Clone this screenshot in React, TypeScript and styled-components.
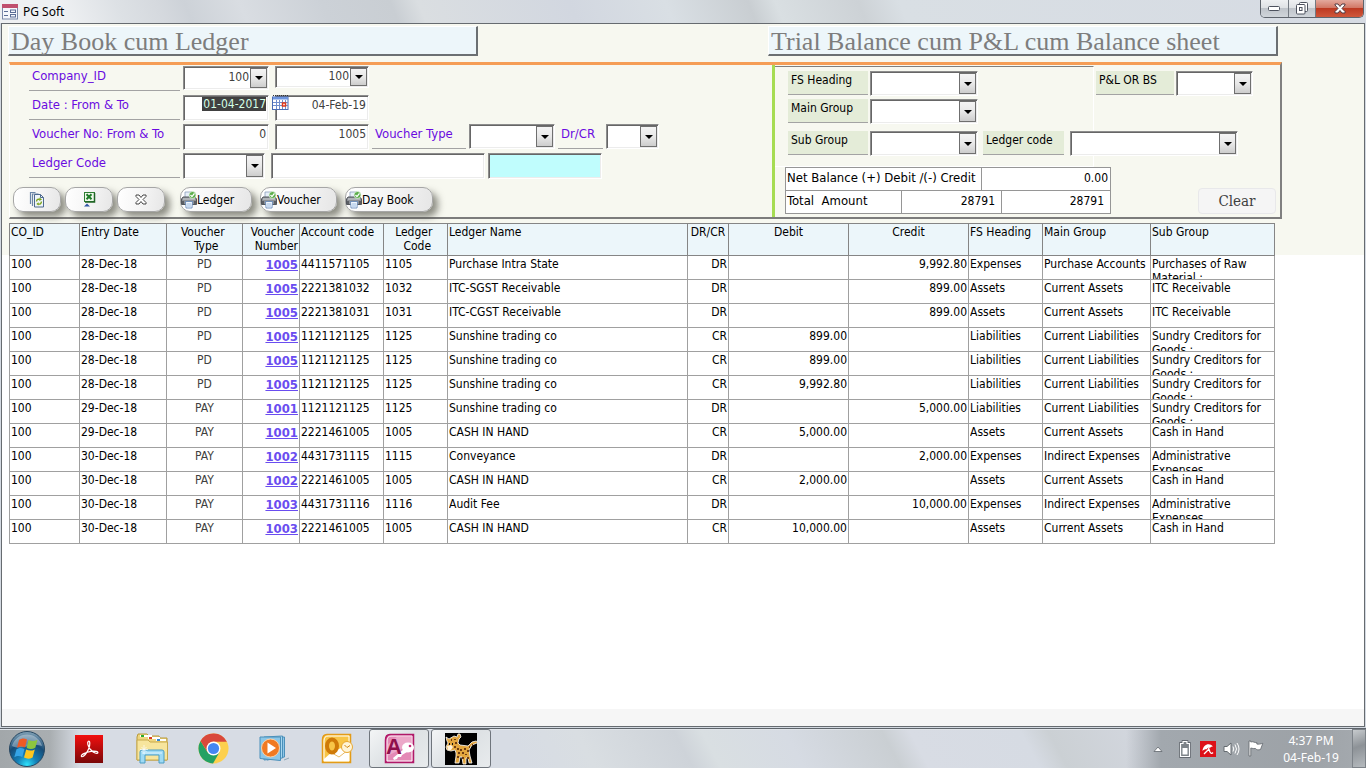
import React from "react";
import styled, { createGlobalStyle, css } from "styled-components";

const ui = `"DejaVu Sans Condensed", "DejaVu Sans", sans-serif`;
const book = `"Liberation Serif", serif`;
const cream = "#f7f8f0";

const Global = createGlobalStyle`
  * { box-sizing: border-box; }
  body { margin: 0; font: 12px/14px ${ui}; color: #000; background: #d3d9e1; }
  button, input, select { font: inherit; color: inherit; margin: 0; }
`;

const Screen = styled.div`
  display: flex;
  flex-direction: column;
  min-height: 100vh;
  overflow: hidden;
`;

/* ---------- window chrome ---------- */
const TitleBar = styled.header`
  display: flex;
  align-items: center;
  gap: 5px;
  height: 23px;
  padding: 0 2px;
  background: linear-gradient(68deg, #eef0f2 0 5%, #dde1e5 9%, #d5d9de 12%, #cdd2d8 14%, #d9dde2 18%, #ccd1d7 24%, #c9ced3 29%, #dadee1 31%, #d2d7e0 42%, #d9dfe4 49%, #c9ced2 55%, #d9dfe2 57%, #cdd2d6 63%, #d9dfe4 66%, #d6dbe3);
`;
const AppName = styled.span`
  flex: 1;
  font: 12px/16px "Noto Sans", sans-serif;
`;
const WindowButtons = styled.div`
  display: flex;
  align-self: flex-start;
  height: 18px;
  border: 1px solid #5f656d;
  border-top: 0;
  border-radius: 0 0 5px 5px;
  overflow: hidden;
`;
const WindowButton = styled.button<{ $w: number; $close?: boolean }>`
  display: grid;
  place-items: center;
  width: ${(p) => p.$w}px;
  padding: 0;
  border: 0;
  border-right: ${(p) => (p.$close ? 0 : 1)}px solid #747a82;
  background: ${(p) =>
    p.$close
      ? "linear-gradient(#e3a99d, #d27866 45%, #bd3a22 50%, #d0573a)"
      : "linear-gradient(#eef0f2, #dfe2e5 45%, #bfc4ca 50%, #d0d5da)"};
`;
const Frame = styled.main`
  display: flex;
  flex: 1;
  flex-direction: column;
  margin: 0 1px 1px;
  border: 1px solid #666b70;
  background: #fff;
`;
const FooterStrip = styled.div`
  height: 17px;
  margin-top: auto;
  background: #f6f6f6;
`;

/* ---------- form header ---------- */
const FormHeader = styled.section`
  padding: 2px 82px 4px 6px;
  background: ${cream};
`;
const Headings = styled.div`
  display: flex;
  justify-content: space-between;
  padding: 0 4px 0 0;
  margin-bottom: 6px;
`;
const Heading = styled.h1<{ $w: number }>`
  width: ${(p) => p.$w}px;
  height: 30px;
  margin: 0;
  padding: 0 2px;
  border: 1px solid #fff;
  border-right: 2px solid #6b6f72;
  border-bottom: 2px solid #6b6f72;
  background: #edf6fa;
  color: #7d7d7d;
  font: 26px/30px ${book};
  white-space: nowrap;
`;
const Panel = styled.div`
  display: flex;
  height: 157px;
  margin-left: 1px;
  border: solid;
  border-width: 3px 2px 2px 1px;
  border-color: #f59d56 #808080 #7c7c7c #fff;
`;
const Filters = styled.form`
  flex: 1;
  padding-top: 1px;
`;
const Row = styled.div<{ $h?: number }>`
  display: flex;
  gap: 3px;
  height: ${(p) => p.$h ?? 29}px;
  padding-left: 19px;
`;
const Label = styled.label<{ $w: number }>`
  flex: none;
  width: ${(p) => p.$w}px;
  height: 25px;
  padding: 2px 3px;
  border-bottom: 1px solid #a3a3a3;
  color: #6a0be0;
  font-size: 13px;
  line-height: 16px;
  white-space: nowrap;
`;
const Slot = styled.div<{ $w: number }>`
  position: relative;
  flex: none;
  width: ${(p) => p.$w}px;
`;
const sunken = css`
  border: 1px solid;
  border-color: #8c8c8c #fff #fff #8c8c8c;
  box-shadow: inset 1px 1px #666, inset -1px -1px #ececec;
`;
const Box = styled.input<{ $w: number; $tint?: string }>`
  ${sunken}
  display: block;
  width: ${(p) => p.$w}px;
  height: 26px;
  padding: 0 2px 6px;
  border-radius: 0;
  background: ${(p) => p.$tint ?? "#fff"};
  color: #404040;
  text-align: right;
`;
const DateBox = styled.div`
  ${sunken}
  display: flex;
  justify-content: flex-end;
  width: 86px;
  height: 26px;
  padding: 1px 2px;
  background: #fff;
`;
const SelectedInput = styled.input`
  width: 64px;
  height: 14px;
  padding: 0;
  border: 0;
  background: #404040;
  color: #d5ffe6;
  text-align: right;
`;
const ComboFrame = styled.div<{ $w: number; $h?: number }>`
  ${sunken}
  display: grid;
  flex: none;
  width: ${(p) => p.$w}px;
  height: ${(p) => p.$h ?? 25}px;
  background: #fff;
`;
const ComboSelect = styled.select`
  grid-area: 1 / 1;
  width: 100%;
  min-width: 0;
  padding: 0 19px 3px 0;
  border: 0;
  background: transparent;
  appearance: none;
  color: #404040;
  text-align: right;
  text-align-last: right;
`;
const ComboArrow = styled.span`
  display: grid;
  grid-area: 1 / 1;
  justify-self: end;
  place-items: center;
  width: 17px;
  margin: 1px;
  border: 1px solid #6f6f6f;
  background: linear-gradient(#f4f4f4, #e8e8e8 50%, #cdcdcd);
  pointer-events: none;
`;
const CalendarButton = styled.button`
  position: absolute;
  top: 0;
  left: -3px;
  padding: 0;
  border: 0;
  background: none;
  line-height: 0;
`;
const Actions = styled.div`
  display: flex;
  gap: 4px;
  padding: 5px 0 0 3px;
`;
const ActionGroup = styled.div`
  display: flex;
  gap: 8px;
  margin-left: 11px;
`;
const Pill = styled.button<{ $w: number }>`
  display: flex;
  align-items: center;
  justify-content: ${(p) => (p.$w > 50 ? "flex-start" : "center")};
  width: ${(p) => p.$w}px;
  height: 25px;
  padding: 0;
  border: 1px solid #a6a6a6;
  border-radius: 10px;
  background: linear-gradient(100deg, #fff, #f5f5f5 50%, #e6e6e6);
  box-shadow: 5px 5px 7px rgba(70, 70, 60, 0.6);
`;

/* ---------- balance side ---------- */
const Balance = styled.form`
  width: 508px;
  border-left: 3px solid #a6dc52;
`;
const BalanceTop = styled.div`
  display: flex;
  height: 102px;
  padding-top: 1px;
`;
const Inset = styled.div`
  width: 319px;
  padding-top: 4px;
  border: solid;
  border-width: 1px 1px 1px 0;
  border-color: #7f7f7f #fff #fff;
`;
const BalanceRow = styled.div<{ $h: number; $pad: number }>`
  display: flex;
  gap: 2px;
  height: ${(p) => p.$h}px;
  padding-left: ${(p) => p.$pad}px;
`;
const GreenLabel = styled.label<{ $w: number }>`
  flex: none;
  width: ${(p) => p.$w}px;
  height: 24px;
  padding: 1px 3px;
  border-bottom: 1px solid #a3a3a3;
  background: #e4ecd8;
  line-height: 16px;
`;
const Side = styled.div`
  padding-top: 5px;
`;
const LedgerPair = styled.div`
  display: flex;
  gap: 6px;
  margin-left: 3px;
`;
const BalanceBottom = styled.div`
  display: flex;
  align-items: flex-end;
  justify-content: space-between;
  padding: 0 4px 0 10px;
`;
const Totals = styled.table`
  width: 326px;
  table-layout: fixed;
  border-collapse: collapse;
  background: #fff;
  th, td {
    height: 23px;
    padding: 2px 2px 0 1px;
    border: 1px solid #969696;
    font-weight: 400;
    line-height: 16px;
    text-align: left;
    vertical-align: top;
    white-space: pre;
  }
  th { font-size: 13px; }
  td { text-align: right; }
  tr + tr td { padding-right: 6px; }
`;
const ClearButton = styled.button`
  width: 78px;
  height: 26px;
  border: 1px solid #e8e8ea;
  border-radius: 4px;
  background: #f5f5f5;
  color: #404040;
  font: 15px/20px "DejaVu Serif Condensed", "DejaVu Serif", serif;
`;

/* ---------- ledger grid ---------- */
const Ledger = styled.table`
  width: calc(100% - 96px);
  margin-left: 7px;
  table-layout: fixed;
  border-collapse: collapse;
  background: #fff;
`;
const LedgerBand = styled.section`
  background: linear-gradient(${cream} 32px, #fff 32px);
`;
const HeadCell = styled.th<{ $align?: string }>`
  height: 32px;
  padding: 1px 1px 0 1px;
  border: 1px solid #858585;
  background: #ecf6fa;
  font-weight: 400;
  text-align: ${(p) => p.$align ?? "left"};
  vertical-align: top;
  white-space: pre;
`;
const Cell = styled.td<{ $align?: string; $soft?: boolean }>`
  height: 24px;
  padding: 0 1px;
  border: 1px solid #a0a0a0;
  color: ${(p) => (p.$soft ? "#404040" : "#000")};
  text-align: ${(p) => p.$align ?? "left"};
  vertical-align: top;
`;
const Clip = styled.div`
  height: 23px;
  padding-top: 1px;
  overflow: hidden;
`;
const VoucherLink = styled.a`
  color: #6a4df0;
  font-size: 13px;
  font-weight: 700;
  line-height: 16px;
  text-decoration: underline;
`;

/* ---------- taskbar ---------- */
const Taskbar = styled.footer`
  display: flex;
  align-items: center;
  height: 40px;
  border-top: 1px solid #5e646b;
  background:
    linear-gradient(90deg, #a2a7aa 0, #a9aeb1 50px, transparent 80px, transparent calc(100% - 240px), #a2a8ae calc(100% - 205px), #9da2a7 calc(100% - 60px), #a5aaaf),
    linear-gradient(62deg, #d7dce4 38%, #d9dee2 43%, #ced3d9 50%, #d9dfe2 52%, #d6dbe3 58%, #cacfd3 65%, #d8dce4 67%, #d6dbe3 75%, #cbd0d4 77%, #d3d7df 84%);
  box-shadow: inset 0 1px #e1e5ea;
`;
const TaskButton = styled.button<{ $w: number; $open?: boolean }>`
  display: grid;
  place-items: center;
  width: ${(p) => p.$w}px;
  height: 39px;
  padding: 0;
  border: 1px solid ${(p) => (p.$open ? "#6f757c" : "transparent")};
  border-radius: 3px;
  background: ${(p) => (p.$open ? "linear-gradient(135deg, #f3f5f6, #dde1e4 50%, #e8ebed)" : "none")};
`;
const OpenApps = styled.div`
  display: flex;
  gap: 2px;
`;
const Tray = styled.div`
  display: flex;
  flex: 1;
  align-items: center;
  justify-content: flex-end;
  gap: 7px;
`;
const Clock = styled.time`
  width: 68px;
  margin: 0 0 0 6px;
  color: #fff;
  font: 12px/17px "Noto Sans", sans-serif;
  text-align: center;
`;
const ShowDesktop = styled.button`
  width: 14px;
  height: 39px;
  padding: 0;
  border: 1px solid #7d8389;
  background: linear-gradient(160deg, #c6cacd, #8d9297 45%, #b5babe);
`;

/* ---------- drawings ---------- */
const Arrow = () => (
  <svg width="8" height="4" viewBox="0 0 8 4"><path d="M0 0h8L4 4z" /></svg>
);
const FormIcon = () => (
  <svg width="16" height="16" viewBox="0 0 16 16">
    <rect x=".5" y="1" width="15" height="14" fill="#f5f7fb" stroke="#7b89a8" />
    <rect x="0" y="0" width="16" height="4" fill="#c0506e" />
    <path d="M2 7.500h4M2 11.500h4" stroke="#5b6d95" />
    <rect x="8.500" y="6" width="5" height="2.500" fill="none" stroke="#5b6d95" />
    <rect x="8.500" y="10.500" width="5" height="2.500" fill="none" stroke="#5b6d95" />
  </svg>
);
const Calendar = () => (
  <svg width="17" height="15" viewBox="0 0 17 15">
    <rect x=".5" y="2" width="15.500" height="12.500" fill="#fff" stroke="#4a6cb3" />
    <rect x="1" y="2" width="15" height="2.500" fill="#6d95df" />
    <path d="M1 .5h15" stroke="#333" strokeDasharray="1 1" />
    <path d="M4.500 5v9M7.500 5v9M10.500 5v9M13.500 5v9M1 7.500h15M1 10.500h15" stroke="#6f8ecb" />
    <rect x="10.500" y="8" width="3" height="3" fill="#fff" stroke="#e03a1c" strokeWidth="1.500" />
  </svg>
);
const Refresh = () => (
  <svg width="16" height="17" viewBox="0 0 16 17">
    <path d="M1.500 13V1.500h5M3.500 15V3h6" fill="none" stroke="#6b86a8" strokeWidth="1.200" />
    <path d="M5.500 3.500h6l3 3v9.500h-9z" fill="#eef4fa" stroke="#4f6a8e" />
    <path d="M11.500 3.500v3h3" fill="none" stroke="#4f6a8e" />
    <path d="M7.500 10.500c.2-2 1.800-2.700 3.300-2M12.500 10.500c-.2 2.300-1.800 3-3.300 2.500" fill="none" stroke="#7fa51c" strokeWidth="1.400" />
    <path d="M10.500 6.500l2.500 2-2.700 1.400zM9.500 11.300L7.300 13l2.400 1.400z" fill="#7fa51c" />
  </svg>
);
const Excel = () => (
  <svg width="14" height="17" viewBox="0 0 14 17">
    <rect x="2.500" y="1.500" width="10" height="9" fill="#eef8ea" stroke="#2e7d32" />
    <path d="M12.500 2v9H3" fill="none" stroke="#1f6425" strokeWidth="1.500" />
    <path d="M4.500 3.300l5 5M9.500 3.300l-5 5" stroke="#1c7b25" strokeWidth="2" />
    <path d="M2 15.500l3-3 3 3z" fill="#2f55a4" />
  </svg>
);
const Cross = () => (
  <svg width="12" height="11" viewBox="0 0 12 11">
    <path d="M1 1h3l2 2.500L8 1h3v1.500L8 5.500l3 3V10H8L6 7.500 4 10H1V8.500l3-3-3-3z" fill="#fff" stroke="#444" />
  </svg>
);
const Printer = () => (
  <svg width="16" height="18" viewBox="0 0 16 18">
    <path d="M4 1h7v6H4z" fill="#e6eef8" stroke="#8ba0bb" strokeWidth=".8" />
    <path d="M2 6h12l1.500 2v5.500H.5V8z" fill="#8c9096" stroke="#53575d" />
    <path d="M2 8h12" stroke="#d3d6da" />
    <path d="M2 10v3M14 10v3" stroke="#4b4e54" strokeWidth="1.500" />
    <path d="M4.500 10.500h7l-.5 6.500H5z" fill="#f2f7fd" stroke="#5d84b8" strokeWidth=".8" />
    <path d="M6 13h4M6 15h4" stroke="#9bbce4" />
    <circle cx="11.500" cy="4" r="3.500" fill="#5cae4b" stroke="#e8f4e4" strokeWidth=".7" />
    <path d="M9.500 4l1.500 1.600 2.500-3.200" fill="none" stroke="#fff" strokeWidth="1.300" />
  </svg>
);
const StartOrb = () => (
  <svg width="38" height="38" viewBox="0 0 38 38">
    <defs>
      <radialGradient id="orb" cx=".5" cy=".95" r=".95">
        <stop offset="0" stopColor="#2de2fb" /><stop offset=".3" stopColor="#147fb6" /><stop offset=".65" stopColor="#174c77" /><stop offset="1" stopColor="#86a5b9" />
      </radialGradient>
    </defs>
    <circle cx="19" cy="19" r="17.500" fill="url(#orb)" stroke="#274761" />
    <path d="M4 16a15.500 15.500 0 0 1 30 0c-9-4-20 5-30 0z" fill="#fff" opacity=".35" />
    <path d="M11 10c3-2 5-2 8-.5l-2 8c-3-1.500-5-1.500-8 .3z" fill="#ef5a25" />
    <path d="M20.500 10c3 1.500 6 1.500 9-.3l-2.200 8c-3 1.600-5.500 1.600-8.600.2z" fill="#8dc63f" />
    <path d="M8.500 19.300c3-1.800 5-1.700 8-.3l-2.200 8c-3-1.400-5-1.500-8 .3z" fill="#35a4e6" />
    <path d="M18.200 19.500c3 1.500 5.500 1.500 8.600-.1l-2.200 8c-3 1.700-5.600 1.600-8.600.2z" fill="#fdc61f" />
  </svg>
);
const Acrobat = () => (
  <svg width="28" height="28" viewBox="0 0 28 28">
    <defs><linearGradient id="ac" x2="0" y2="1"><stop stopColor="#f20f0f" /><stop offset="1" stopColor="#7a0808" /></linearGradient></defs>
    <rect width="28" height="28" fill="url(#ac)" />
    <path d="M13.200 6.500c2-1.500 2 3 .6 7-1.500 4-5.500 9.300-7.300 8-1.500-1.500 4.500-4.400 9.500-5.200 4-.6 7.500.2 6.800 1.700-.8 1.300-5.200-.8-7.800-4-2-2.600-3-6.300-1.800-7.500z" fill="none" stroke="#fff" strokeWidth="1.200" />
  </svg>
);
const Folders = () => (
  <svg width="33" height="31" viewBox="0 0 33 31">
    <path d="M1 4l1-3h9l2 2h10l1 2h7v22H1z" fill="#efd67f" stroke="#b89a3c" />
    <path d="M4 2h12v2H4zM12 4h12v2H12zM20 6h10v2H20z" fill="#fff" />
    <path d="M5 2h3v2H5z" fill="#29ab2f" /><path d="M13 4h3v2h-3z" fill="#d63b22" /><path d="M21 6h3v2h-3z" fill="#3287d4" />
    <path d="M1 7h11l2 2h17.500v18H1z" fill="#f7e59d" stroke="#c8aa4d" />
    <path d="M4 30V19q0-2 2-2h20q2 0 2 2v11h-5v-8H9v8z" fill="#9edaf4" stroke="#4b9dc5" />
    <path d="M6 20h20" stroke="#e2f6ff" />
    <path d="M8 12v9M4 16.500h8M5.500 14l5 5M10.500 14l-5 5" stroke="#fff" strokeWidth=".7" />
  </svg>
);
const Chrome = () => (
  <svg width="31" height="31" viewBox="0 0 32 32">
    <circle cx="16" cy="16" r="15.500" fill="#fdd04d" />
    <path d="M2.600 8.200A15.500 15.500 0 0 0 15.500 31.500L22 20l-12 0z" fill="#23a164" />
    <path d="M16 9h13.800A15.500 15.500 0 0 0 2.600 8.200L9.800 19.600z" fill="#d9483b" />
    <circle cx="16" cy="16" r="7.200" fill="#fff" /><circle cx="16" cy="16" r="5.800" fill="#4587f3" />
  </svg>
);
const Player = () => (
  <svg width="32" height="27" viewBox="0 0 32 27">
    <path d="M8 3l17.500-1v20l-17.500 3z" fill="#8fc6e6" stroke="#4b90ba" />
    <path d="M5 2l18.500-1v22l-18.500 2z" fill="#a8d8f0" stroke="#4b90ba" />
    <path d="M1 2h20.500v23.500L1 23.500z" fill="#8bc7e8" stroke="#4b90ba" />
    <path d="M25 25l5-2" stroke="#8fa8b8" />
    <circle cx="11.500" cy="13" r="9" fill="#f07a22" stroke="#fbd0a6" />
    <path d="M8.500 7.500l8.500 5.500-8.500 5.500z" fill="#fff" />
  </svg>
);
const Outlook = () => (
  <svg width="32" height="31" viewBox="0 0 32 31">
    <path d="M6 1.500h23.500v28H1.500V7q0-5.500 4.500-5.500z" fill="#f8c547" stroke="#e39b18" strokeWidth="1.500" />
    <path d="M7 3h21v25H3V8q0-5 4-5z" fill="none" stroke="#fff" />
    <path d="M3 26l8-7 9-4 8 5v8H3z" fill="#fff" /><path d="M11 20l7 4 9-7" fill="none" stroke="#e9bc68" />
    <ellipse cx="11" cy="13" rx="5" ry="6.500" fill="none" stroke="#cf7a08" strokeWidth="4" />
    <circle cx="26" cy="14" r="5.500" fill="#fff5d8" stroke="#e8a835" /><path d="M23.500 12l2.500 2.500 3-2" fill="none" stroke="#d18816" />
  </svg>
);
const Access = () => (
  <svg width="31" height="31" viewBox="0 0 31 31">
    <path d="M6 1.500h23.500v28H1.500V7q0-5.500 4.500-5.500z" fill="#c93f86" stroke="#b01868" strokeWidth="1.500" />
    <path d="M7 3h21v25H3V8q0-5 4-5z" fill="#e489b6" stroke="#fff" />
    <path d="M28 3v8L3 23V12L14 3z" fill="#f2bdd6" opacity=".6" />
    <ellipse cx="24" cy="14.500" rx="6" ry="5" fill="#fff" /><path d="M20 16L9 25l1 2 3-1 1-2 3 0 1-2 5-3z" fill="#fff" /><circle cx="26" cy="13" r="1.300" fill="#c42a77" />
    <text x="2" y="21" fontFamily="Liberation Sans, sans-serif" fontWeight="700" fontSize="22" fill="#8f0f4c">A</text>
  </svg>
);
const Giraffe = () => (
  <svg width="32" height="32" viewBox="0 0 32 32">
    <rect width="32" height="32" fill="#000" />
    <path d="M4 6L1 4l1 4 1 2-2 4 1 3 4 1 4-1 1 3v3l-1 7h4l1-6 2 0 1 7h3l0-6 2 0 1 5h3l-2-7-1-6 3-5 5-2 1-1-2-1-4 1-4 4-8-1-2-2 1-4 2-2-1-3-2 0-1 3-3-1z" fill="#e3a63e" stroke="#fff" strokeWidth=".8" />
    <path d="M2 13l4-1 2 2-2 3-3 0z" fill="#fff2d8" />
    <path d="M6 6h1v2H6zM9 6h2v1H9zM10 9h2v2h-2zM9 13h2v2H9zM12 15h2v2h-2zM15 16h2v2h-2zM19 15h2v2h-2zM22 17h2v2h-2zM13 19h2v2h-2zM17 19h2v2h-2zM20 21h2v1h-2zM12 23h2v2h-2zM17 24h2v2h-2zM22 24h2v2h-2zM24 13h1v2h-1zM27 11h1v2h-1z" fill="#6f3d12" />
    <path d="M4 10h1v2H4zM7 10h1v2H7z" fill="#111" />
  </svg>
);

/* ---------- composed parts ---------- */
type ComboProps = { id: string; w: number; h?: number; value?: string; label?: string };
const Combo = ({ id, w, h, value = "", label }: ComboProps) => (
  <ComboFrame $w={w} $h={h}>
    <ComboSelect id={id} aria-label={label} defaultValue={value}>
      <option value={value}>{value}</option>
    </ComboSelect>
    <ComboArrow><Arrow /></ComboArrow>
  </ComboFrame>
);

const columns: [string, number | null, string?][] = [
  ["CO_ID", 70], ["Entry Date", 87], ["Voucher \n Type", 76, "center"], ["Voucher \nNumber", 57, "right"],
  ["Account code", 84], ["Ledger \n Code", 64, "center"], ["Ledger Name", null], ["DR/CR", 41, "center"],
  ["Debit", 120, "center"], ["Credit", 120, "center"], ["FS Heading", 74], ["Main Group", 108], ["Sub Group", 124],
];
const align = ["", "", "center", "right", "", "", "", "right", "right", "right", "", "", ""];
const A = "Assets", CA = "Current Assets", CL = "Current Liabilities", SC = "Sundry Creditors for Goods :";
const entries: string[][] = [
  ["28-Dec-18", "PD", "1005", "4411571105", "1105", "Purchase Intra State", "DR", "", "9,992.80", "Expenses", "Purchase Accounts", "Purchases of Raw Material :"],
  ["28-Dec-18", "PD", "1005", "2221381032", "1032", "ITC-SGST Receivable", "DR", "", "899.00", A, CA, "ITC Receivable"],
  ["28-Dec-18", "PD", "1005", "2221381031", "1031", "ITC-CGST Receivable", "DR", "", "899.00", A, CA, "ITC Receivable"],
  ["28-Dec-18", "PD", "1005", "1121121125", "1125", "Sunshine trading co", "CR", "899.00", "", "Liabilities", CL, SC],
  ["28-Dec-18", "PD", "1005", "1121121125", "1125", "Sunshine trading co", "CR", "899.00", "", "Liabilities", CL, SC],
  ["28-Dec-18", "PD", "1005", "1121121125", "1125", "Sunshine trading co", "CR", "9,992.80", "", "Liabilities", CL, SC],
  ["29-Dec-18", "PAY", "1001", "1121121125", "1125", "Sunshine trading co", "DR", "", "5,000.00", "Liabilities", CL, SC],
  ["29-Dec-18", "PAY", "1001", "2221461005", "1005", "CASH IN HAND", "CR", "5,000.00", "", A, CA, "Cash in Hand"],
  ["30-Dec-18", "PAY", "1002", "4431731115", "1115", "Conveyance", "DR", "", "2,000.00", "Expenses", "Indirect Expenses", "Administrative Expenses"],
  ["30-Dec-18", "PAY", "1002", "2221461005", "1005", "CASH IN HAND", "CR", "2,000.00", "", A, CA, "Cash in Hand"],
  ["30-Dec-18", "PAY", "1003", "4431731116", "1116", "Audit Fee", "DR", "", "10,000.00", "Expenses", "Indirect Expenses", "Administrative Expenses"],
  ["30-Dec-18", "PAY", "1003", "2221461005", "1005", "CASH IN HAND", "CR", "10,000.00", "", A, CA, "Cash in Hand"],
];

export default function App() {
  return (
    <Screen>
      <Global />
      <TitleBar>
        <FormIcon />
        <AppName>PG Soft</AppName>
        <WindowButtons>
          <WindowButton $w={28} aria-label="Minimize">
            <svg width="13" height="6"><rect x=".5" y=".5" width="11" height="4" rx="1" fill="#fff" stroke="#4d525e" /></svg>
          </WindowButton>
          <WindowButton $w={27} aria-label="Restore">
            <svg width="13" height="13" fill="#fff" stroke="#4d525e">
              <rect x="3.500" y=".5" width="8" height="9" rx="1" /><rect x=".5" y="2.500" width="8.500" height="9.500" rx="1" /><rect x="3.500" y="5.500" width="2.500" height="3" />
            </svg>
          </WindowButton>
          <WindowButton $w={47} $close aria-label="Close">
            <svg width="12" height="11" viewBox="0 0 12 11"><path d="M1 1h3l2 2.500L8 1h3v1L8 5.500l3 3V10H8L6 7.500 4 10H1V8.500l3-3L1 2z" fill="#fff" stroke="#533b42" /></svg>
          </WindowButton>
        </WindowButtons>
      </TitleBar>

      <Frame>
        <FormHeader>
          <Headings>
            <Heading $w={470}>Day Book cum Ledger</Heading>
            <Heading $w={510}>Trial Balance cum P&amp;L cum Balance sheet</Heading>
          </Headings>
          <Panel>
            <Filters>
              <Row>
                <Label $w={151} htmlFor="company">Company_ID</Label>
                <Slot $w={89}><Combo id="company" w={86} h={24} value="100" /></Slot>
                <Combo id="company-to" label="Company to" w={94} h={22} value="100" />
              </Row>
              <Row>
                <Label $w={151} htmlFor="date">Date : From &amp; To</Label>
                <Slot $w={89}><DateBox><SelectedInput id="date" defaultValue="01-04-2017" /></DateBox></Slot>
                <Slot $w={94}>
                  <Box $w={94} aria-label="Date to" defaultValue="04-Feb-19" />
                  <CalendarButton type="button" aria-label="Pick date"><Calendar /></CalendarButton>
                </Slot>
              </Row>
              <Row>
                <Label $w={151} htmlFor="voucher">Voucher No: From &amp; To</Label>
                <Slot $w={89}><Box $w={86} id="voucher" defaultValue="0" /></Slot>
                <Slot $w={94}><Box $w={94} aria-label="Voucher to" defaultValue="1005" /></Slot>
                <Label $w={94} htmlFor="vtype">Voucher Type</Label>
                <Combo id="vtype" w={86} />
                <Label $w={45} htmlFor="drcr">Dr/CR</Label>
                <Combo id="drcr" w={53} />
              </Row>
              <Row>
                <Label $w={151} htmlFor="lcode">Ledger Code</Label>
                <Slot $w={85}><Combo id="lcode" w={82} h={26} /></Slot>
                <Box $w={214} aria-label="Ledger name" />
                <Box $w={114} $tint="#c0fdfd" aria-label="Ledger balance" />
              </Row>
              <Actions>
                <Pill $w={48} type="button" aria-label="Refresh"><Refresh /></Pill>
                <Pill $w={48} type="button" aria-label="Export to Excel"><Excel /></Pill>
                <Pill $w={48} type="button" aria-label="Close form"><Cross /></Pill>
                <ActionGroup>
                  <Pill $w={72} type="button"><Printer />Ledger</Pill>
                  <Pill $w={77} type="button"><Printer />Voucher</Pill>
                  <Pill $w={88} type="button"><Printer />Day Book</Pill>
                </ActionGroup>
              </Actions>
            </Filters>

            <Balance>
              <BalanceTop>
                <Inset>
                  <BalanceRow $h={28} $pad={13}>
                    <GreenLabel $w={80} htmlFor="fs">FS Heading</GreenLabel><Combo id="fs" w={108} />
                  </BalanceRow>
                  <BalanceRow $h={32} $pad={13}>
                    <GreenLabel $w={80} htmlFor="main">Main Group</GreenLabel><Combo id="main" w={108} />
                  </BalanceRow>
                  <BalanceRow $h={28} $pad={13}>
                    <GreenLabel $w={80} htmlFor="sub">Sub Group</GreenLabel><Combo id="sub" w={108} />
                    <LedgerPair>
                      <GreenLabel $w={81} htmlFor="lc">Ledger code</GreenLabel><Combo id="lc" w={168} />
                    </LedgerPair>
                  </BalanceRow>
                </Inset>
                <Side>
                  <BalanceRow $h={28} $pad={2}>
                    <GreenLabel $w={78} htmlFor="plbs">P&amp;L OR BS</GreenLabel><Combo id="plbs" w={77} />
                  </BalanceRow>
                </Side>
              </BalanceTop>
              <BalanceBottom>
                <Totals>
                  <colgroup><col width="116" /><col width="80" /><col width="20" /><col width="109" /></colgroup>
                  <tbody>
                    <tr><th colSpan={2} scope="row">Net Balance (+) Debit /(-) Credit</th><td colSpan={2}>0.00</td></tr>
                    <tr><th scope="row">Total  Amount</th><td colSpan={2}>28791</td><td>28791</td></tr>
                  </tbody>
                </Totals>
                <ClearButton type="button">Clear</ClearButton>
              </BalanceBottom>
            </Balance>
          </Panel>
        </FormHeader>

        <LedgerBand>
          <Ledger>
            <colgroup>{columns.map(([name, w]) => <col key={name} width={w ?? undefined} />)}</colgroup>
            <thead>
              <tr>{columns.map(([name, , a]) => <HeadCell key={name} $align={a} scope="col">{name}</HeadCell>)}</tr>
            </thead>
            <tbody>
              {entries.map((entry, r) => (
                <tr key={r}>
                  {["100", ...entry].map((text, c) => (
                    <Cell key={c} $align={align[c]} $soft={c === 2}>
                      <Clip>{c === 3 ? <VoucherLink href="#voucher">{text}</VoucherLink> : text}</Clip>
                    </Cell>
                  ))}
                </tr>
              ))}
            </tbody>
          </Ledger>
        </LedgerBand>
        <FooterStrip />
      </Frame>

      <Taskbar>
        <TaskButton $w={54} aria-label="Start"><StartOrb /></TaskButton>
        <TaskButton $w={70} aria-label="Acrobat"><Acrobat /></TaskButton>
        <TaskButton $w={56} aria-label="Explorer"><Folders /></TaskButton>
        <TaskButton $w={66} aria-label="Chrome"><Chrome /></TaskButton>
        <TaskButton $w={58} aria-label="Media Player"><Player /></TaskButton>
        <TaskButton $w={65} aria-label="Outlook"><Outlook /></TaskButton>
        <OpenApps>
          <TaskButton $w={60} $open aria-label="Access"><Access /></TaskButton>
          <TaskButton $w={60} $open aria-label="PG Soft"><Giraffe /></TaskButton>
        </OpenApps>
        <Tray>
          <svg width="21" height="8" viewBox="0 0 21 8"><path d="M5 6.500L9 2l4 4.500z" fill="#fff" stroke="#60666c" strokeWidth=".8" /></svg>
          <svg width="16" height="18" viewBox="0 0 16 18">
            <path d="M6 1.500h4v2h2.500v13h-9v-13H6z" fill="#7d8388" stroke="#50565c" strokeWidth="2.500" />
            <path d="M6 1.500h4v2h2.500v13h-9v-13H6z" fill="#7d8388" stroke="#fff" strokeWidth="1.200" /><path d="M5.500 8h5v6.500h-5z" fill="#fff" />
          </svg>
          <svg width="16" height="16" viewBox="0 0 16 16">
            <rect width="16" height="16" fill="#dd1018" />
            <path d="M2.500 10C3 4 9 1 13 5.500c-1.500 0-2.500.5-3 1.500-1-.5-2.500 0-3.200 1.200C5.500 8 3.500 8.500 2.500 10z" fill="#fff" />
            <path d="M8.500 7l1.500 4q1.500 2.500 3 .5M9 8l-5 5" fill="none" stroke="#fff" strokeWidth="1.300" />
          </svg>
          <svg width="17" height="16" viewBox="0 0 17 16" fill="none" stroke="#fff">
            <path d="M1 5.500h3L8 2v12l-4-3.500H1z" fill="#fff" stroke="#656b70" /><path d="M10 5.500q1.500 2.500 0 5M12 3.500q3 4.500 0 9M14 2q4 6 0 12" />
          </svg>
          <svg width="17" height="17" viewBox="0 0 17 17">
            <path d="M2 1h1.800v1c2-1 4 1 6 .5V4c2 .5 3.500 0 6-.7L13.500 9.500c-2 .7-4 .5-5-1-1.500.3-3 0-4.700-.5v8H2z" fill="#fff" stroke="#5f656b" strokeWidth=".8" />
          </svg>
          <Clock>4:37 PM<br />04-Feb-19</Clock>
          <ShowDesktop aria-label="Show desktop" />
        </Tray>
      </Taskbar>
    </Screen>
  );
}
